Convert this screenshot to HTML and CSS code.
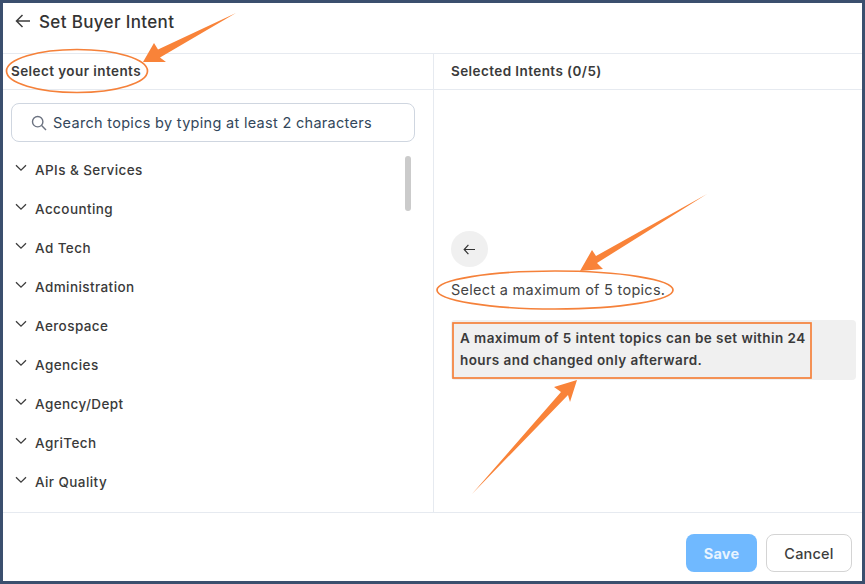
FILE: index.html
```html
<!DOCTYPE html>
<html lang="en">
<head>
<meta charset="utf-8">
<title>Set Buyer Intent</title>
<link rel="stylesheet" href="styles.css">
</head>
<body>
<div class="frame">
  <header class="top">
    <svg class="back" viewBox="0 0 16 16" width="16" height="16"><path d="M15 8H1.5M7.5 2 1.5 8l6 6" fill="none" stroke="#3d3d3d" stroke-width="1.5"/></svg>
    <h1>Set Buyer Intent</h1>
  </header>
  <main class="cols">
    <section class="left">
      <div class="colhead">Select your intents</div>
      <div class="searchwrap">
        <div class="search">
          <svg viewBox="0 0 16 16" width="16" height="16"><circle cx="6.7" cy="6.7" r="5.2" fill="none" stroke="#6b7280" stroke-width="1.4"/><path d="m10.6 10.6 4.4 4.4" stroke="#6b7280" stroke-width="1.4"/></svg>
          <span>Search topics by typing at least 2 characters</span>
        </div>
      </div>
      <div class="listwrap">
        <ul class="list">
          <li><svg viewBox="0 0 12 8" width="12" height="8"><path d="m1 1.2 5 5 5-5" fill="none" stroke="#3d3d3d" stroke-width="1.3"/></svg>APIs &amp; Services</li>
          <li><svg viewBox="0 0 12 8" width="12" height="8"><path d="m1 1.2 5 5 5-5" fill="none" stroke="#3d3d3d" stroke-width="1.3"/></svg>Accounting</li>
          <li><svg viewBox="0 0 12 8" width="12" height="8"><path d="m1 1.2 5 5 5-5" fill="none" stroke="#3d3d3d" stroke-width="1.3"/></svg>Ad Tech</li>
          <li><svg viewBox="0 0 12 8" width="12" height="8"><path d="m1 1.2 5 5 5-5" fill="none" stroke="#3d3d3d" stroke-width="1.3"/></svg>Administration</li>
          <li><svg viewBox="0 0 12 8" width="12" height="8"><path d="m1 1.2 5 5 5-5" fill="none" stroke="#3d3d3d" stroke-width="1.3"/></svg>Aerospace</li>
          <li><svg viewBox="0 0 12 8" width="12" height="8"><path d="m1 1.2 5 5 5-5" fill="none" stroke="#3d3d3d" stroke-width="1.3"/></svg>Agencies</li>
          <li><svg viewBox="0 0 12 8" width="12" height="8"><path d="m1 1.2 5 5 5-5" fill="none" stroke="#3d3d3d" stroke-width="1.3"/></svg>Agency/Dept</li>
          <li><svg viewBox="0 0 12 8" width="12" height="8"><path d="m1 1.2 5 5 5-5" fill="none" stroke="#3d3d3d" stroke-width="1.3"/></svg>AgriTech</li>
          <li><svg viewBox="0 0 12 8" width="12" height="8"><path d="m1 1.2 5 5 5-5" fill="none" stroke="#3d3d3d" stroke-width="1.3"/></svg>Air Quality</li>
        </ul>
        <div class="scrollbar"></div>
      </div>
    </section>
    <section class="right">
      <div class="colhead">Selected Intents (0/5)</div>
      <div class="empty">
        <div class="circle"><svg viewBox="0 0 14 12" width="13" height="11"><path d="M13 6H1.2M5.8 1 1.2 6l4.6 5" fill="none" stroke="#333" stroke-width="1.3"/></svg></div>
        <p class="hint">Select a maximum of 5 topics.</p>
        <div class="note">A maximum of 5 intent topics can be set within 24<br>hours and changed only afterward.</div>
      </div>
    </section>
  </main>
  <footer class="foot">
    <button class="save">Save</button>
    <button class="cancel">Cancel</button>
  </footer>
</div>
<svg class="marks" viewBox="0 0 865 584" width="865" height="584">
  <g fill="none" stroke="#f5813a" stroke-width="1.7">
    <ellipse cx="77" cy="71" rx="70.5" ry="21.5"/>
    <ellipse cx="555" cy="290" rx="118" ry="19"/>
    <rect x="453" y="323" width="358" height="55"/>
  </g>
  <g fill="#f98339">
    <polygon points="236,13 158,49.5 154,43 143,62 166,62 160,57.5"/>
    <polygon points="707,194 596,256 592,250 580,271 603,269 597,263"/>
    <polygon points="472,494 561,392 554,387 577,380 570,402 568,395"/>
  </g>
</svg>
</body>
</html>
```
FILE: styles.css
```css
* { box-sizing: border-box; }
html, body { margin: 0; padding: 0; }
body { width: 865px; height: 584px; overflow: hidden; background: #3b4f6e; position: relative; font-family: "Inter", "Liberation Sans", sans-serif; color: #3a3a3a; }
.frame { margin: 3px; width: 859px; height: 578px; background: #fff; display: flex; flex-direction: column; }
.top { height: 51px; flex: none; display: flex; align-items: flex-start; gap: 8px; padding: 9px 0 0 12px; border-bottom: 1px solid #e6eaf0; }
.back { margin-top: 1px; }
.top h1 { margin: 0; font-size: 17px; line-height: 21px; font-weight: 500; letter-spacing: .35px; color: #333; }
.cols { flex: 1; display: flex; min-height: 0; }
.left { width: 431px; flex: none; border-right: 1px solid #e6eaf0; display: flex; flex-direction: column; min-height: 0; }
.colhead { height: 36px; flex: none; border-bottom: 1px solid #e6eaf0; font-size: 13.5px; letter-spacing: .42px; font-weight: 600; line-height: 35px; padding-left: 8px; color: #3a3a3a; }
.right .colhead { padding-left: 17px; }
.searchwrap { padding: 13px 18px 0 8px; flex: none; }
.search { height: 39px; border: 1px solid #cfd6e0; border-radius: 8px; display: flex; align-items: center; gap: 6px; padding-left: 19px; font-size: 14.5px; letter-spacing: .3px; color: #33475b; }
.listwrap { flex: 1; position: relative; min-height: 0; overflow: hidden; }
.list { list-style: none; margin: 0; padding: 8px 0 0 12px; }
.list li { height: 39px; display: flex; align-items: center; gap: 8px; font-size: 13.5px; letter-spacing: .42px; font-weight: 500; color: #3a3a3a; }
.list li svg { margin-top: -4px; flex: none; }
.scrollbar { position: absolute; left: 402px; top: 14px; width: 6px; height: 55px; border-radius: 3px; background: #cbcbcb; }
.right { flex: 1; min-width: 0; display: flex; flex-direction: column; }
.empty { flex: 1; padding: 141px 6px 0 17px; }
.circle { width: 37px; height: 36px; border-radius: 50%; background: #f0f0f0; display: flex; align-items: center; justify-content: center; }
.hint { margin: 13px 0 0; font-size: 14.5px; letter-spacing: .28px; line-height: 20px; color: #444; }
.note { margin-top: 20px; height: 60px; background: #f0f0f0; border-radius: 4px; padding: 7px 0 0 9px; font-size: 13.5px; letter-spacing: .43px; line-height: 22px; font-weight: 600; color: #3a3a3a; }
.foot { height: 69px; flex: none; border-top: 1px solid #e6eaf0; display: flex; justify-content: flex-end; align-items: flex-start; gap: 9px; padding: 21px 10px 0 0; }
.foot button { height: 38px; border-radius: 8px; font-family: inherit; font-size: 14.5px; letter-spacing: .2px; }
.save { width: 71px; background: #70b9ff; border: none; color: #e8f4ff; font-weight: 700; }
.cancel { width: 86px; background: #fff; border: 1px solid #d4d4d4; color: #3d3d3d; font-weight: 500; }
.marks { position: absolute; left: 0; top: 0; pointer-events: none; }
```
